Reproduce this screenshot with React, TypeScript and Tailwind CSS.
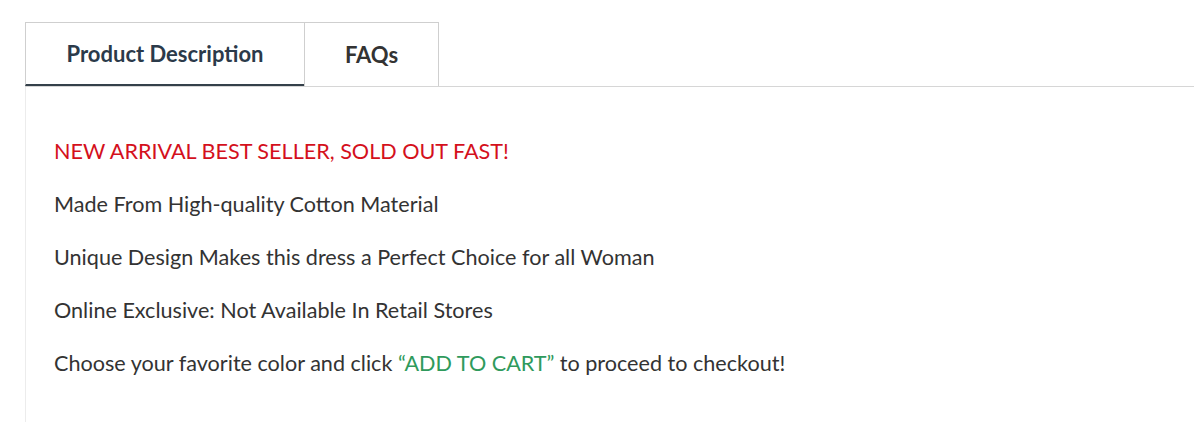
import React from 'react';

const lines = [
  'Made From High-quality Cotton Material',
  'Unique Design Makes this dress a Perfect Choice for all Woman',
  'Online Exclusive: Not Available In Retail Stores',
];

export default function App() {
  return (
    <div className="min-h-screen bg-white pl-[25px] pt-[22px] font-['Lato',sans-serif] overflow-hidden h-[422px]">
      <div className="flex border-b border-[#d6d6d6]">
        <button className="w-[279px] h-[64px] border-t border-l border-[#cfcfcf] border-b-[2px] border-b-[#34404a] -mb-[1px] text-[22px] font-bold text-[#2b3a4a]">
          Product Description
        </button>
        <button className="w-[135px] h-[64px] border-t border-l border-r border-[#cfcfcf] text-[22px] font-bold text-[#333]">
          FAQs
        </button>
      </div>
      <div className="border-l border-[#ececec] pl-[28px] pt-[48px] text-[21.6px] leading-[33px] text-[#333] flex flex-col gap-[20px]">
        <p className="text-[#d4101c]">NEW ARRIVAL BEST SELLER, SOLD OUT FAST!</p>
        {lines.map((l) => (
          <p key={l}>{l}</p>
        ))}
        <p>
          Choose your favorite color and click <span className="text-[#2f9a5c]">“ADD TO CART”</span> to proceed to checkout!
        </p>
        <div className="h-[40px]" />
      </div>
    </div>
  );
}
